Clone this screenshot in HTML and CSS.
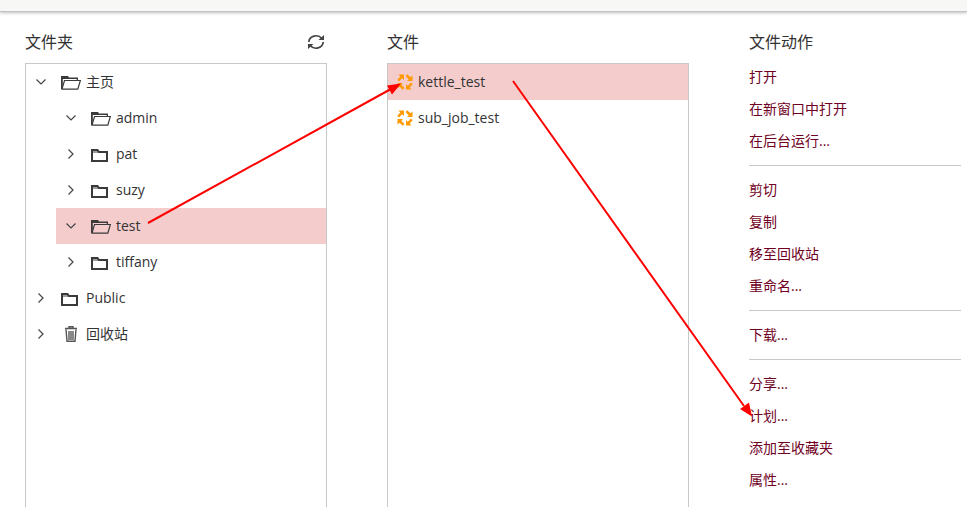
FILE: index.html
```html
<!DOCTYPE html>
<html lang="zh">
<head>
    <meta charset="UTF-8">
    <meta name="viewport" content="width=device-width, initial-scale=1.0">
    <title>浏览文件</title>
    <link rel="stylesheet" href="styles.css">
</head>
<body>
    <!-- 图标 -->
    <svg class="sprite" aria-hidden="true">
        <symbol id="down" viewBox="0 0 12 12"><path d="M1.5 4.5 6 9l4.5-4.5" fill="none" stroke="#444" stroke-width="1.2"/></symbol>
        <symbol id="right" viewBox="0 0 12 12"><path d="M3.5 2.5 8 7l-4.500 4.500" fill="none" stroke="#444" stroke-width="1.2"/></symbol>
        <symbol id="folder-open" viewBox="0 0 20 16"><path d="M0 2h7l1 1.500h9V6h-1.300V5H1.800v7L1 15H0z" fill="#3a3a3a"/><path d="M1 15.200h15.800L19.400 6.500H3.500z" fill="none" stroke="#3a3a3a" stroke-width="1.2"/></symbol>
        <symbol id="folder" viewBox="0 0 20 16"><path d="M1 15V4h5.500l1.500 2h8v9z" fill="none" stroke="#3a3a3a" stroke-width="2"/><path d="M1 6h7" stroke="#3a3a3a"/></symbol>
        <symbol id="trash" viewBox="0 0 20 16"><path d="M4 2.500h12M8 2V.7h4V2M5 3.500l1 11.700h8l1-11.700M8 5v9M10 5v9M12 5v9" fill="none" stroke="#555" stroke-width="1.4"/></symbol>
        <symbol id="job" viewBox="0 0 16 16">
            <g fill="#ff9a00">
                <path id="job-arrow" d="M1.500 .5H7V6L5.200 4.300 2 7.500.3 5.700 3.300 2.500z"/>
                <use href="#job-arrow" transform="rotate(90 8 8)"/>
                <use href="#job-arrow" transform="rotate(180 8 8)"/>
                <use href="#job-arrow" transform="rotate(270 8 8)"/>
            </g>
        </symbol>
        <symbol id="refresh" viewBox="0 0 18 16"><path d="M1.800 8a7.200 6.500 0 0 1 13-3.500M16.200 8a7.200 6.500 0 0 1-13 3.500" fill="none" stroke="#444" stroke-width="1.700"/><path d="M17 1v5h-5.500zM1 15v-5h5.500z" fill="#444"/></symbol>
    </svg>

    <header class="topbar"></header>

    <main class="browser">
        <section class="column">
            <div class="column-head">
                <h2>文件夹</h2>
                <button class="refresh" type="button" aria-label="刷新"><svg><use href="#refresh"/></svg></button>
            </div>
            <div class="panel">
                <ul class="tree">
                    <li>
                        <div class="row"><svg class="arrow"><use href="#down"/></svg><svg class="icon"><use href="#folder-open"/></svg>主页</div>
                        <ul>
                            <li class="row"><svg class="arrow"><use href="#down"/></svg><svg class="icon"><use href="#folder-open"/></svg>admin</li>
                            <li class="row"><svg class="arrow"><use href="#right"/></svg><svg class="icon"><use href="#folder"/></svg>pat</li>
                            <li class="row"><svg class="arrow"><use href="#right"/></svg><svg class="icon"><use href="#folder"/></svg>suzy</li>
                            <li class="row selected"><svg class="arrow"><use href="#down"/></svg><svg class="icon"><use href="#folder-open"/></svg>test</li>
                            <li class="row"><svg class="arrow"><use href="#right"/></svg><svg class="icon"><use href="#folder"/></svg>tiffany</li>
                        </ul>
                    </li>
                    <li class="row"><svg class="arrow"><use href="#right"/></svg><svg class="icon"><use href="#folder"/></svg>Public</li>
                    <li class="row"><svg class="arrow"><use href="#right"/></svg><svg class="icon"><use href="#trash"/></svg>回收站</li>
                </ul>
            </div>
        </section>

        <section class="column">
            <div class="column-head">
                <h2>文件</h2>
            </div>
            <div class="panel">
                <ul class="files">
                    <li class="row selected"><svg class="job"><use href="#job"/></svg>kettle_test</li>
                    <li class="row"><svg class="job"><use href="#job"/></svg>sub_job_test</li>
                </ul>
            </div>
        </section>

        <section class="column">
            <div class="column-head">
                <h2>文件动作</h2>
            </div>
            <div class="actions">
                <button type="button">打开</button>
                <button type="button">在新窗口中打开</button>
                <button type="button">在后台运行...</button>
                <hr>
                <button type="button">剪切</button>
                <button type="button">复制</button>
                <button type="button">移至回收站</button>
                <button type="button">重命名...</button>
                <hr>
                <button type="button">下载...</button>
                <hr>
                <button type="button">分享...</button>
                <button type="button">计划...</button>
                <button type="button">添加至收藏夹</button>
                <button type="button">属性...</button>
            </div>
        </section>
    </main>

    <!-- 操作步骤箭头 -->
    <svg class="steps" viewBox="0 0 967 507" aria-hidden="true">
        <path d="M148 223 390 89.500M513 81l231 325" stroke="#f00" stroke-width="2" fill="none"/>
        <path d="M401 83.500 387 85.500l5 9zM752 416.500l-3-14-9 6.500z" fill="#f00"/>
    </svg>
</body>
</html>
```
FILE: styles.css
```css
* {
    box-sizing: border-box;
}

body {
    position: relative;
    display: flex;
    flex-direction: column;
    height: 100vh;
    margin: 0;
    overflow: hidden;
    background-color: #fff;
    color: #333;
    font-family: "Open Sans", "Noto Sans CJK SC", sans-serif;
    font-size: 14px;
}

ul {
    margin: 0;
    padding: 0;
    list-style: none;
}

button {
    padding: 0;
    border: none;
    background: none;
    font: inherit;
    cursor: pointer;
}

.sprite {
    position: absolute;
    width: 0;
    height: 0;
}

.topbar {
    flex: none;
    height: 12px;
    background-color: #f7f7f5;
    border-bottom: 1px solid #c3c3c3;
    box-shadow: 0 1px 3px rgba(0, 0, 0, 0.25);
}

.browser {
    flex: 1;
    display: grid;
    grid-template-columns: 302fr 302fr 212fr;
    column-gap: 60px;
    padding: 16px 6px 0 25px;
}

.column {
    display: flex;
    flex-direction: column;
    min-width: 0;
}

.column-head {
    display: flex;
    align-items: center;
    justify-content: space-between;
    height: 28px;
}

.column-head h2 {
    margin: 0;
    font-size: 16px;
    font-weight: 400;
    line-height: 28px;
}

.refresh {
    margin-right: 2px;
}

.refresh svg {
    display: block;
    width: 18px;
    height: 16px;
}

.panel {
    flex: 1;
    margin-top: 7px;
    border: 1px solid #c8c8c8;
    border-bottom: none;
}

.row {
    display: flex;
    align-items: center;
    height: 36px;
    padding-bottom: 2px;
}

.selected {
    background-color: #f4cccc;
}

.tree ul {
    padding-left: 30px;
}

.arrow {
    width: 12px;
    height: 12px;
    margin: 0 9px;
}

.icon {
    width: 20px;
    height: 16px;
    margin: 2px 5px 0;
}

.job {
    width: 16px;
    height: 16px;
    margin: 2px 5px 0 9px;
}

.actions {
    display: flex;
    flex-direction: column;
    margin-top: 5px;
}

.actions button {
    height: 32px;
    padding-bottom: 2px;
    color: #700023;
    text-align: left;
}

.actions hr {
    width: 100%;
    margin: 8px 0;
    border: none;
    border-top: 1px solid #c8c8c8;
}

.steps {
    position: absolute;
    top: 0;
    left: 0;
    width: 967px;
    height: 507px;
    pointer-events: none;
}
```
